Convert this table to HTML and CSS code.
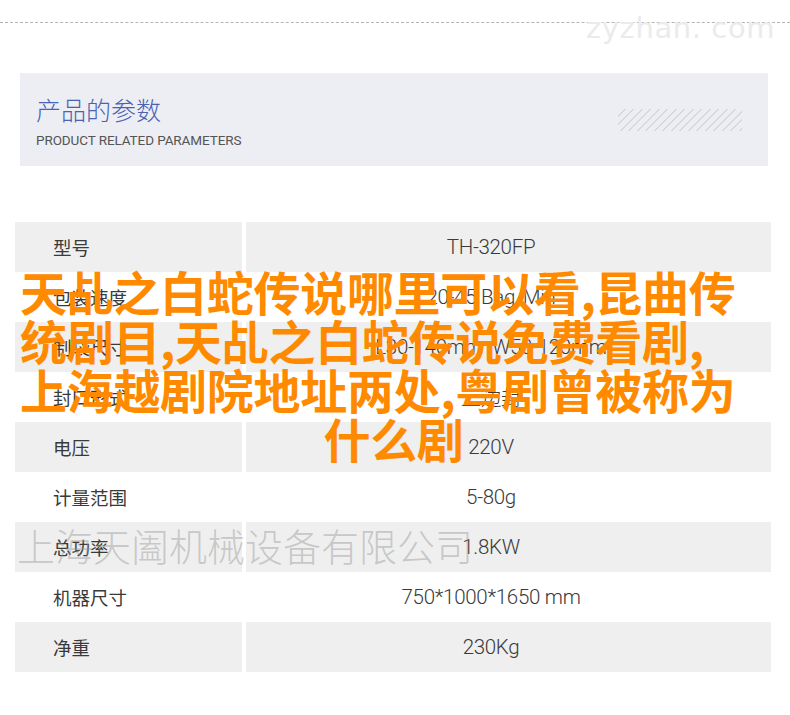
FILE: index.html
```html
<!DOCTYPE html>
<html lang="zh-CN">
<head>
    <meta charset="UTF-8">
    <title>产品的参数</title>
    <link rel="stylesheet" href="styles.css">
</head>
<body>

    <!-- Top dashed rule -->
    <div class="topline">
        <span class="site-mark">zyzhan. com</span>
    </div>

    <!-- Section heading -->
    <div class="heading">
        <div class="heading-text">
            <h2>产品的参数</h2>
            <p>PRODUCT RELATED PARAMETERS</p>
        </div>
        <div class="hatch"></div>
    </div>

    <!-- Parameter table -->
    <div class="params">
        <div class="row shaded"><div class="label">型号</div><div class="value">TH-320FP</div></div>
        <div class="row"><div class="label">包装速度</div><div class="value">20-45 Bag/Min</div></div>
        <div class="row shaded"><div class="label">制袋尺寸</div><div class="value">L30-140mm  W50-120mm</div></div>
        <div class="row"><div class="label">封口形式</div><div class="value">三边封</div></div>
        <div class="row shaded"><div class="label">电压</div><div class="value">220V</div></div>
        <div class="row"><div class="label">计量范围</div><div class="value">5-80g</div></div>
        <div class="row shaded"><div class="label">总功率</div><div class="value">1.8KW</div></div>
        <div class="row"><div class="label">机器尺寸</div><div class="value">750*1000*1650 mm</div></div>
        <div class="row shaded"><div class="label">净重</div><div class="value">230Kg</div></div>
    </div>

    <!-- Overlays -->
    <div class="headline">
        天乩之白蛇传说哪里可以看,昆曲传<br>统剧目,天乩之白蛇传说免费看剧,<br>上海越剧院地址两处,粤剧曾被称为
        <span class="tail">什么剧</span>
    </div>
    <div class="company">上海天阖机械设备有限公司</div>

</body>
</html>
```

FILE: styles.css
```css
/* General */
body {
    margin: 0;
    background: #ffffff;
    font-family: Roboto, "Noto Sans CJK SC", sans-serif;
    color: #444;
    position: relative;
    width: 790px;
    height: 715px;
    overflow: hidden;
}

/* Top rule */
.topline {
    height: 22px;
    border-bottom: 1px dashed #b4b4b4;
    position: relative;
}

.site-mark {
    position: absolute;
    left: 586px;
    top: 11px;
    font-family: "DejaVu Sans", sans-serif;
    font-size: 29px;
    letter-spacing: 0.6px;
    color: #ebebeb;
}

/* Heading box */
.heading {
    margin: 50px 22px 0 20px;
    height: 93px;
    box-sizing: border-box;
    background: #eceef3;
    display: flex;
    justify-content: space-between;
    align-items: flex-start;
    padding: 21px 26px 0 16px;
}

.heading h2 {
    margin: 0;
    font-family: "Noto Sans CJK SC", sans-serif;
    font-weight: 300;
    font-size: 25px;
    line-height: 30px;
    color: #4b62b3;
}

.heading p {
    margin: 8px 0 0;
    font-size: 13.5px;
    line-height: 16px;
    letter-spacing: -0.1px;
    color: #555;
}

.hatch {
    width: 124px;
    height: 22px;
    margin-top: 15px;
    background: repeating-linear-gradient(135deg, #eceef3 0px, #eceef3 4.5px, #d6d8dd 4.5px, #d6d8dd 6px);
}

/* Parameters */
.params {
    margin: 56px 19px 0 15px;
}

.row {
    display: grid;
    grid-template-columns: 227px 1fr;
    column-gap: 4px;
    height: 50px;
}

.row.shaded .label,
.row.shaded .value {
    background: #efefef;
}

.label {
    padding-left: 38px;
    display: flex;
    align-items: center;
    font-family: "Noto Sans CJK SC", sans-serif;
    font-size: 18.5px;
    color: #3a3a3a;
}

.value {
    display: flex;
    align-items: center;
    justify-content: center;
    padding-right: 35px;
    font-size: 20.5px;
    font-weight: 300;
    letter-spacing: -0.3px;
    color: #3a3a3a;
    white-space: pre;
}

/* Overlay texts */
.headline {
    position: absolute;
    left: 20px;
    top: 266px;
    width: 747px;
    font-family: "Noto Sans CJK SC", sans-serif;
    font-weight: 700;
    font-size: 47px;
    line-height: 49px;
    letter-spacing: -0.3px;
    color: #ff8a00;
}

.headline .tail {
    display: block;
    text-align: center;
}

.company {
    position: absolute;
    left: 17px;
    top: 520px;
    font-family: "Noto Sans CJK SC", sans-serif;
    font-weight: 300;
    font-size: 38px;
    line-height: 50px;
    color: rgba(150, 150, 150, 0.45);
}
```
